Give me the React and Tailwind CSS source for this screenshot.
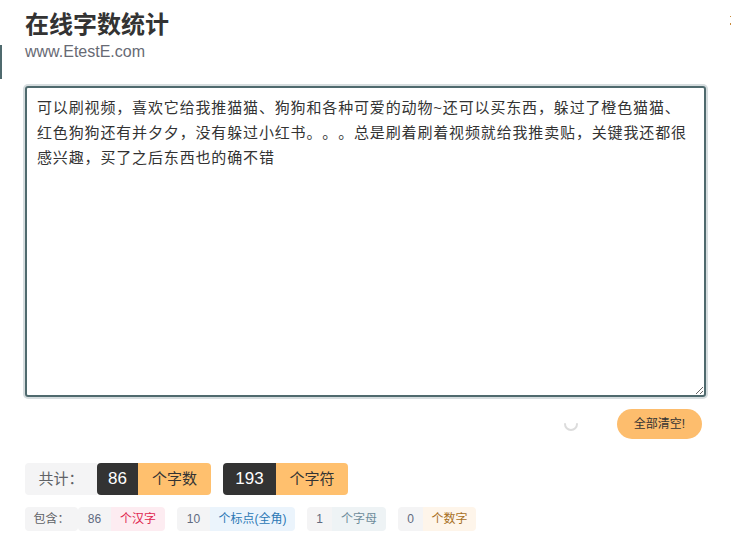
import { useState } from 'react';

const sample =
  '可以刷视频，喜欢它给我推猫猫、狗狗和各种可爱的动物~还可以买东西，躲过了橙色猫猫、红色狗狗还有并夕夕，没有躲过小红书。。。总是刷着刷着视频就给我推卖贴，关键我还都很感兴趣，买了之后东西也的确不错';

const details = [
  { num: '86', label: '个汉字', numW: 'w-[33px]', labelW: 'w-[54px]', tone: 'bg-[#fdecf1] text-[#e0264f]' },
  { num: '10', label: '个标点(全角)', numW: 'w-[33px]', labelW: 'w-[85px]', tone: 'bg-[#ebf4fc] text-[#2b78b5]' },
  { num: '1', label: '个字母', numW: 'w-[25px]', labelW: 'w-[54px]', tone: 'bg-[#eef3f5] text-[#6d8c9b]' },
  { num: '0', label: '个数字', numW: 'w-[25px]', labelW: 'w-[53px]', tone: 'bg-[#fef5ea] text-[#a8701e]' },
];

export default function App() {
  const [text, setText] = useState(sample);

  return (
    <div
      className="relative h-[539px] overflow-hidden bg-white pl-[25px] pr-[26px] text-[#333] [text-spacing-trim:space-all]"
      style={{ fontFamily: '"Liberation Sans", "Noto Sans CJK SC", sans-serif' }}
    >
      {/* bits at the page edges */}
      <span className="absolute left-0 top-[45px] h-[34px] w-[2px] bg-[#4f6a6e]" />
      <span className="absolute right-[1px] top-[16px] h-[1px] w-[1px] bg-[#c98a3c]" />
      <span className="absolute right-[1px] top-[23px] h-[2px] w-[1px] bg-[#c98a3c]" />

      <div className="pt-[10px]">
        <h1 className="text-[24px] font-bold leading-[30px]">在线字数统计</h1>
        <div className="mt-[2px] text-[16px] leading-[20px] text-[#676a74]">www.EtestE.com</div>
      </div>

      <textarea
        value={text}
        onChange={(e) => setText(e.target.value)}
        className="mt-[24px] block h-[311px] w-full resize-y rounded-[3px] border-2 border-[#4f6a6e] px-[10px] pt-[7px] text-[15px] leading-[25px] tracking-[0.85px] text-[#333] shadow-[0_0_0_2px_#d6dddf] outline-none [text-spacing-trim:space-all]"
      />

      <div className="mt-[12px] flex items-center justify-end pr-[4px]">
        <svg width="16" height="16" viewBox="0 0 16 16" className="mr-[38px] mt-[-2px]">
          <path d="M2 9 A6 6 0 0 0 14 9" fill="none" stroke="#dcdcdc" strokeWidth="2" strokeLinecap="round" />
        </svg>
        <button className="h-[30px] w-[85px] rounded-full bg-[#fdbd6d] text-[12px] text-[#333]">全部清空!</button>
      </div>

      <div className="mt-[24px] flex h-[32px] items-stretch text-[15px]">
        <div className="flex w-[72px] items-center justify-center rounded-l-[4px] bg-[#f4f4f5] text-[#606266]">共计：</div>
        <div className="flex w-[41px] items-center justify-center rounded-l-[4px] bg-[#333] text-[17px] text-white">86</div>
        <div className="flex w-[73px] items-center justify-center rounded-r-[4px] bg-[#ffc06e] text-[#333]">个字数</div>
        <div className="ml-[12px] flex w-[53px] items-center justify-center rounded-l-[4px] bg-[#333] text-[17px] text-white">193</div>
        <div className="flex w-[72px] items-center justify-center rounded-r-[4px] bg-[#ffc06e] text-[#333]">个字符</div>
      </div>

      <div className="mt-[12px] flex h-[24px] items-stretch text-[12px]">
        <div className="flex w-[53px] items-center justify-center rounded-[4px] bg-[#f4f4f5] text-[#606266]">包含：</div>
        {details.map((d, i) => (
          <div key={i} className={`flex ${i === 0 ? '' : 'ml-[12px]'}`}>
            <div className={`flex ${d.numW} items-center justify-center rounded-l-[4px] bg-[#f4f4f5] text-[#606a80]`}>{d.num}</div>
            <div className={`flex ${d.labelW} items-center justify-center rounded-r-[4px] ${d.tone}`}>{d.label}</div>
          </div>
        ))}
      </div>
    </div>
  );
}
